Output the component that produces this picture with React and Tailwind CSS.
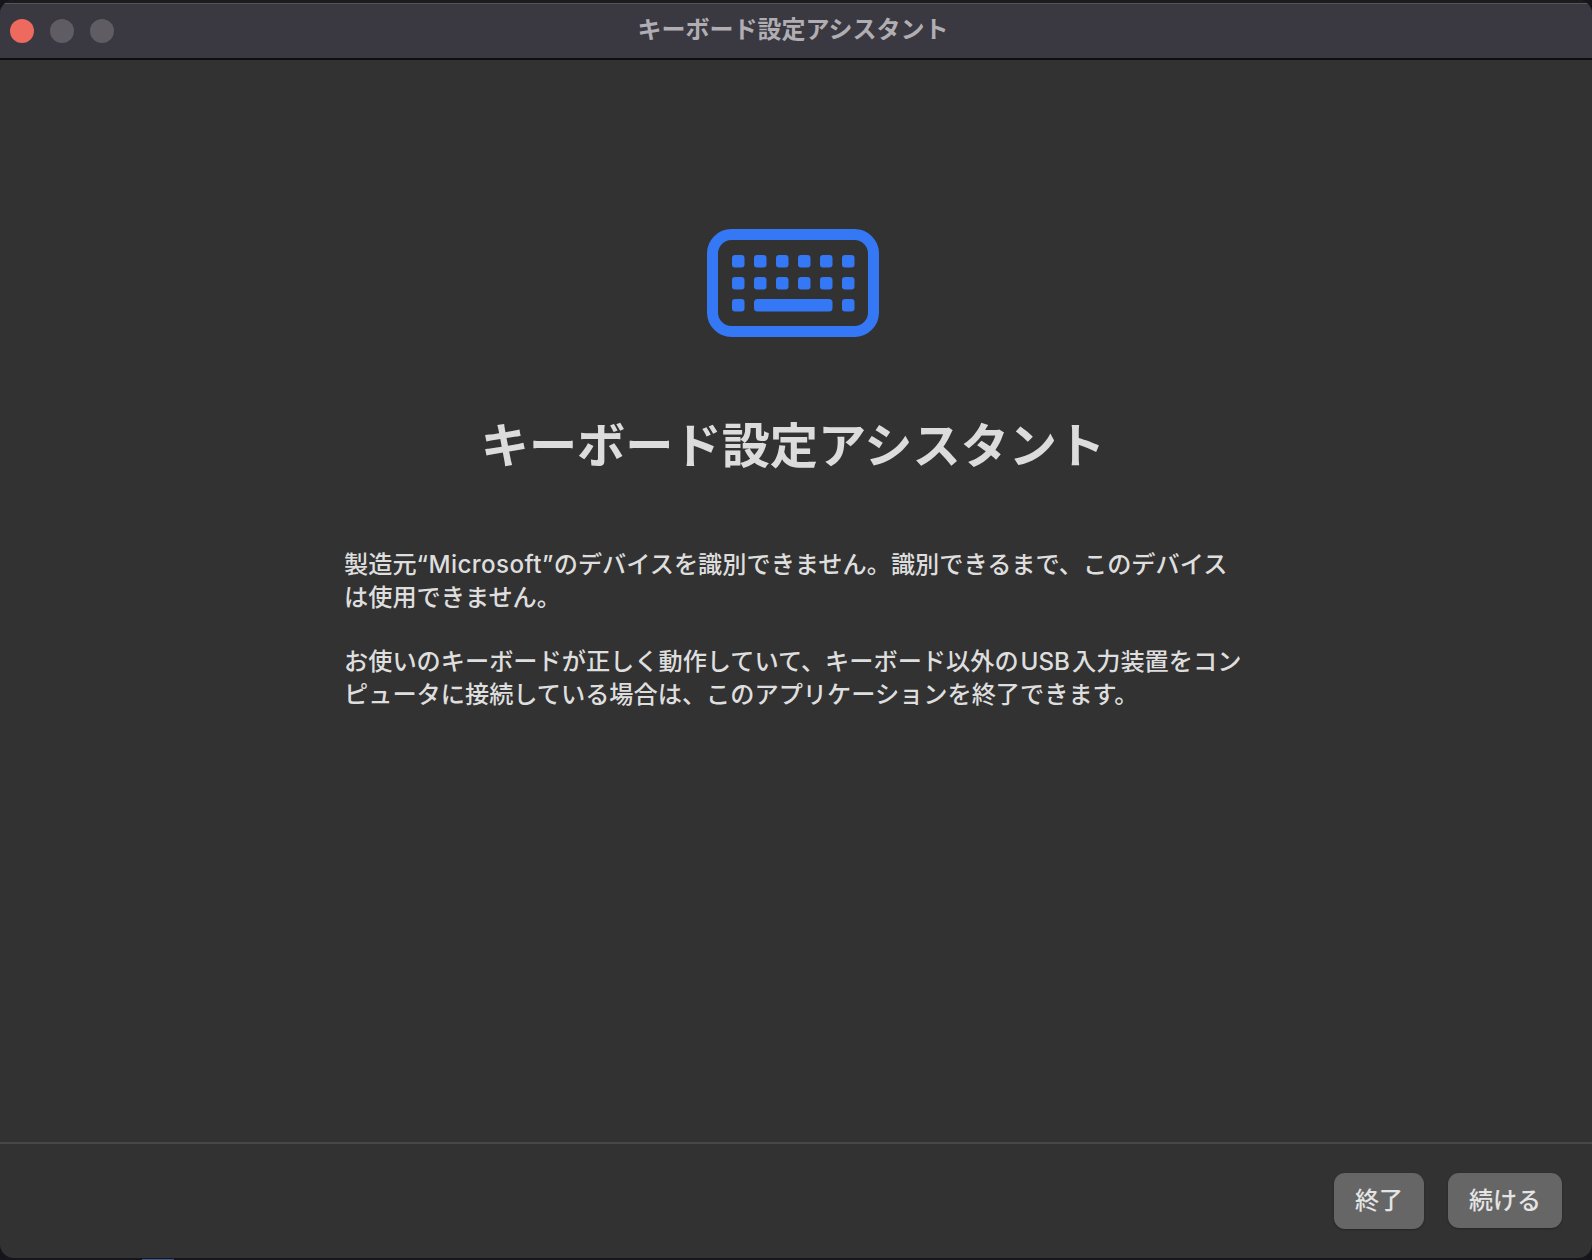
import React from "react";

const fontStack = "font-['Inter','Noto_Sans_CJK_JP',sans-serif]";

const keyRows = [0, 22, 44];
const keyCols = [0, 22, 44, 66, 88, 110];

const KeyboardIcon = () => {
  return (
    <svg width="172" height="108" viewBox="0 0 172 108" fill="none">
      <rect x="5.5" y="5.5" width="161" height="97" rx="19" stroke="#3478f6" strokeWidth="11" />
      {keyRows.slice(0, 2).map((y) =>
        keyCols.map((x) => (
          <rect key={`${x}-${y}`} x={25 + x} y={26 + y} width="12.5" height="12.5" rx="3" fill="#3478f6" />
        ))
      )}
      <rect x="25" y="70" width="12.5" height="12.5" rx="3" fill="#3478f6" />
      <rect x="47" y="70" width="78.5" height="12.5" rx="3.5" fill="#3478f6" />
      <rect x="135" y="70" width="12.5" height="12.5" rx="3" fill="#3478f6" />
    </svg>
  );
};

const App = () => {
  return (
    <div className={`w-[1592px] h-[1260px] overflow-hidden bg-[#16151c] ${fontStack}`}>
      <div className="flex h-[1258px] flex-col overflow-hidden rounded-[14px] bg-[#323232]">
        <div className="h-[3px] bg-[#1c1c1e]" />
        <div className="relative flex h-[55px] items-center justify-center border-t border-[#55545a] bg-[#3a3840] pb-[2px] pr-[6px]">
          <div className="absolute left-[10px] top-[15px] flex gap-[16px]">
            <span className="h-[24px] w-[24px] rounded-full bg-[#ee6a5f]" />
            <span className="h-[24px] w-[24px] rounded-full bg-[#5f5d63]" />
            <span className="h-[24px] w-[24px] rounded-full bg-[#5f5d63]" />
          </div>
          <span className="text-[24px] font-bold leading-none text-[#b0aeb3]">キーボード設定アシスタント</span>
        </div>
        <div className="h-[2px] bg-[#0f0f10]" />

        <div className="flex flex-1 flex-col items-center pr-[6px] pt-[169px]">
          <KeyboardIcon />
          <h1 className="mt-[77px] text-[48.2px] font-bold leading-[64px] text-[#dcdcdc]">キーボード設定アシスタント</h1>
          <div className="ml-[6px] mt-[71px] w-[904px] whitespace-nowrap text-[24.2px] font-medium leading-[32.5px] text-[#dedede]">
            <p>
              製造元<span className="tracking-[0.4px]">“Microsoft”</span>のデバイスを識別できません。識別できるまで、このデバイス
              <br />
              は使用できません。
            </p>
            <p className="mt-[32px]">
              お使いのキーボードが正しく動作していて、キーボード以外の<span className="mx-[2px]">USB</span>入力装置をコン
              <br />
              ピュータに接続している場合は、このアプリケーションを終了できます。
            </p>
          </div>
        </div>

        <div className="flex h-[116px] items-start justify-end gap-[24px] border-t-2 border-[#474747] pr-[30px] pt-[29px]">
          <button className="h-[56px] w-[90px] rounded-[11px] bg-[#666666] text-[24px] font-medium text-[#e4e4e4] shadow-[0_1px_2px_rgba(0,0,0,0.3)]">
            終了
          </button>
          <button className="h-[55px] w-[114px] rounded-[11px] bg-[#666666] text-[24px] font-medium text-[#e4e4e4] shadow-[0_1px_2px_rgba(0,0,0,0.3)]">
            続ける
          </button>
        </div>
      </div>
      <div className="ml-[142px] mt-[1px] h-[1px] w-[32px] bg-[#3d5d8f]" />
    </div>
  );
};

export default App;
